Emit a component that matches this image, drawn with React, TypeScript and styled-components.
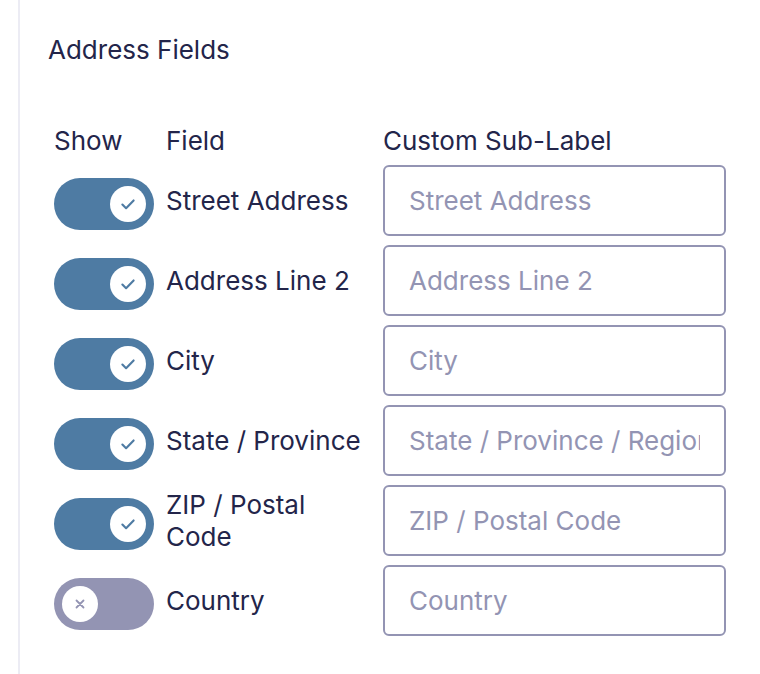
import styled, { createGlobalStyle } from "styled-components";

const GlobalStyle = createGlobalStyle`
  html, body {
    margin: 0;
    padding: 0;
    background: #ffffff;
  }
  body {
    font-family: Inter, "Noto Sans", sans-serif;
    color: #23254a;
  }
`;

const colors = {
  text: "#23254a",
  muted: "#9394b3",
  on: "#4e7ba3",
  rule: "#ececf4",
};

const Panel = styled.div`
  margin-left: 18px;
  border-left: 2px solid ${colors.rule};
  min-height: 674px;
  padding: 34px 0 0 28px;
  box-sizing: border-box;
`;

const Heading = styled.h2`
  margin: 0;
  font-size: 26px;
  font-weight: 400;
  line-height: 32px;
  color: ${colors.text};
`;

const Table = styled.div`
  margin: 59px 0 0 6px;
  display: grid;
  grid-template-columns: 112px 217px 343px;
  row-gap: 9px;
  align-items: center;
`;

const HeadCell = styled.div`
  font-size: 26px;
  line-height: 32px;
  color: ${colors.text};
  margin-bottom: -1px;
`;

const ToggleTrack = styled.button<{ $on: boolean }>`
  width: 100px;
  height: 52px;
  margin-top: 6px;
  padding: 0 8px;
  border: none;
  border-radius: 26px;
  background: ${(p) => (p.$on ? colors.on : colors.muted)};
  display: flex;
  align-items: center;
  justify-content: ${(p) => (p.$on ? "flex-end" : "flex-start")};
  cursor: pointer;
`;

const Knob = styled.span`
  width: 36px;
  height: 36px;
  border-radius: 50%;
  background: #ffffff;
  display: flex;
  align-items: center;
  justify-content: center;
`;

const FieldName = styled.div`
  font-size: 26px;
  line-height: 32px;
  color: ${colors.text};
  padding-right: 8px;
`;

const SubLabelInput = styled.input`
  width: 343px;
  height: 71px;
  box-sizing: border-box;
  border: 2px solid ${colors.muted};
  border-radius: 6px;
  padding: 0 24px;
  font-family: Inter, "Noto Sans", sans-serif;
  font-size: 26px;
  color: ${colors.text};
  background: #ffffff;
  outline: none;

  &::placeholder {
    color: ${colors.muted};
  }
`;

const CheckIcon = () => (
  <svg width="18" height="18" viewBox="0 0 16 16" fill="none">
    <path
      d="M3 8.5l3.3 3.2L13 4.8"
      stroke={colors.on}
      strokeWidth="1.9"
      strokeLinecap="round"
      strokeLinejoin="round"
    />
  </svg>
);

const CrossIcon = () => (
  <svg width="12" height="12" viewBox="0 0 12 12" fill="none">
    <path
      d="M2.5 2.5l7 7M9.5 2.5l-7 7"
      stroke={colors.muted}
      strokeWidth="1.8"
      strokeLinecap="round"
    />
  </svg>
);

const fields = [
  { name: "Street Address", placeholder: "Street Address", on: true },
  { name: "Address Line 2", placeholder: "Address Line 2", on: true },
  { name: "City", placeholder: "City", on: true },
  { name: "State / Province", placeholder: "State / Province / Region", on: true },
  { name: "ZIP / Postal Code", placeholder: "ZIP / Postal Code", on: true },
  { name: "Country", placeholder: "Country", on: false },
];

const App = () => {
  return (
    <>
      <GlobalStyle />
      <Panel>
        <Heading>Address Fields</Heading>
        <Table>
          <HeadCell>Show</HeadCell>
          <HeadCell>Field</HeadCell>
          <HeadCell>Custom Sub-Label</HeadCell>
          {fields.map((f) => (
            <>
              <ToggleTrack key={f.name + "-t"} $on={f.on} aria-pressed={f.on}>
                <Knob>{f.on ? <CheckIcon /> : <CrossIcon />}</Knob>
              </ToggleTrack>
              <FieldName key={f.name + "-n"}>{f.name}</FieldName>
              <SubLabelInput key={f.name + "-i"} placeholder={f.placeholder} />
            </>
          ))}
        </Table>
      </Panel>
    </>
  );
};

export default App;
